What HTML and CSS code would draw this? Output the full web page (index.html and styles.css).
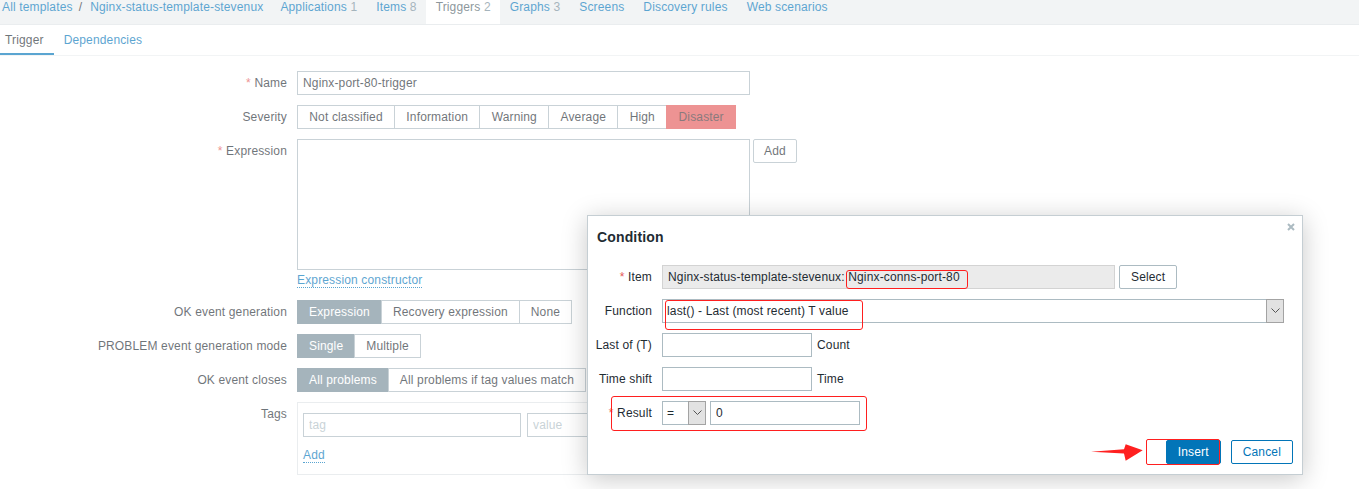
FILE: index.html
```html
<!DOCTYPE html>
<html lang="en">
<head>
<meta charset="utf-8">
<title>Trigger</title>
<link rel="stylesheet" href="styles.css">
</head>
<body>
<header class="hdr">
  <div class="crumbs"><a href="#">All templates</a><span class="sep">/</span><a href="#">Nginx-status-template-stevenux</a></div>
  <ul class="objtabs">
    <li><a href="#">Applications</a> <span class="cnt">1</span></li>
    <li><a href="#">Items</a> <span class="cnt">8</span></li>
    <li class="on"><span class="cur">Triggers</span> <span class="cnt">2</span></li>
    <li><a href="#">Graphs</a> <span class="cnt">3</span></li>
    <li><a href="#">Screens</a></li>
    <li><a href="#">Discovery rules</a></li>
    <li><a href="#">Web scenarios</a></li>
  </ul>
</header>
<nav class="subtabs"><span class="st first on">Trigger</span><a class="st" href="#">Dependencies</a></nav>

<form class="form">
  <label class="lbl"><span class="req">*</span>&nbsp;Name</label>
  <div><input class="inp w-name" value="Nginx-port-80-trigger"></div>

  <label class="lbl">Severity</label>
  <div class="radio">
    <span class="rb sev">Not classified</span><span class="rb sev">Information</span><span class="rb sev">Warning</span><span class="rb sev">Average</span><span class="rb sev">High</span><span class="rb sev dis">Disaster</span>
  </div>

  <label class="lbl"><span class="req">*</span>&nbsp;Expression</label>
  <div>
    <div class="exprline"><textarea class="ta"></textarea><button type="button" class="btn-alt ml3">Add</button></div>
    <div class="linkline"><a class="dotted" href="#">Expression constructor</a></div>
  </div>

  <label class="lbl">OK event generation</label>
  <div class="radio"><span class="rb sel-on">Expression</span><span class="rb">Recovery expression</span><span class="rb">None</span></div>

  <label class="lbl">PROBLEM event generation mode</label>
  <div class="radio"><span class="rb sel-on">Single</span><span class="rb">Multiple</span></div>

  <label class="lbl">OK event closes</label>
  <div class="radio"><span class="rb sel-on">All problems</span><span class="rb">All problems if tag values match</span></div>

  <label class="lbl">Tags</label>
  <div class="tags">
    <div class="tagrow"><input class="inp w-tag" placeholder="tag"><input class="inp w-val" placeholder="value"></div>
    <div class="addline"><a class="dotted" href="#">Add</a></div>
  </div>
</form>

<div class="shade"></div>

<div class="dlg">
  <div class="dlg-h"><h4>Condition</h4></div>
  <svg class="close" width="8" height="8" viewBox="0 0 8 8"><path d="M1 1 L7 7 M7 1 L1 7" stroke="#acbbc2" stroke-width="2"/></svg>
  <div class="dlg-body">
    <label class="lbl"><span class="req">*</span>&nbsp;Item</label>
    <div class="frow"><input class="inp ro w-item" readonly value="Nginx-status-template-stevenux: Nginx-conns-port-80"><button type="button" class="btn-alt ml4">Select</button></div>

    <label class="lbl">Function</label>
    <div class="frow"><div class="sel w-func"><span class="sel-t">last() - Last (most recent) T value</span><span class="sel-a"><svg width="9" height="6" viewBox="0 0 9 6"><path d="M0.5 0.5 L4.5 4.5 L8.5 0.5" fill="none" stroke="#555" stroke-width="1"/></svg></span></div></div>

    <label class="lbl">Last of (T)</label>
    <div class="frow"><input class="inp w-num"><span class="unit">Count</span></div>

    <label class="lbl">Time shift</label>
    <div class="frow"><input class="inp w-num"><span class="unit">Time</span></div>

    <label class="lbl"><span class="req">*</span>&nbsp;Result</label>
    <div class="frow"><div class="sel w-op"><span class="sel-t">=</span><span class="sel-a"><svg width="9" height="6" viewBox="0 0 9 6"><path d="M0.5 0.5 L4.5 4.5 L8.5 0.5" fill="none" stroke="#555" stroke-width="1"/></svg></span></div><input class="inp w-num ml4" value="0"></div>
  </div>
  <div class="dlg-f"><button type="button" class="btn">Insert</button><button type="button" class="btn-line">Cancel</button></div>

  <div class="mark m-item"></div>
  <div class="mark m-func"></div>
  <div class="mark m-res"></div>
  <div class="mark m-ins"></div>
  <svg class="arrow" width="56" height="20" viewBox="0 0 56 20"><polygon points="1,8.7 34,6.3 35.7,1.3 52.7,7.2 35.7,17.7 34,10.6" fill="#ff2020"/></svg>
</div>
</body>
</html>
```

FILE: styles.css
```css
* { box-sizing: border-box; }
html, body { margin: 0; padding: 0; }
body {
  font-family: "Liberation Sans", Arial, sans-serif;
  font-size: 12px;
  letter-spacing: 0.15px;
  color: #1f2c33;
  background: #fff;
  width: 1359px;
  height: 489px;
  overflow: hidden;
  position: relative;
}
a { color: #0275b8; text-decoration: none; }

/* header navigation */
.hdr {
  display: flex;
  align-items: flex-start;
  height: 25px;
  background: #ebeef0;
  border-bottom: 1px solid #dfe4e7;
  line-height: 14px;
}
.crumbs { display: flex; padding-left: 2px; }
.sep { margin: 0 8px 0 6px; color: #1f2c33; }
.objtabs { display: flex; list-style: none; margin: 0 0 0 7px; padding: 0; }
.objtabs li { padding: 0 9px 0 10px; height: 24px; }
.objtabs li.on { background: #fff; }
.cur { color: #4f5f68; }
.cnt { color: #768d99; }

/* sub tabs */
.subtabs {
  display: flex;
  height: 31px;
  border-bottom: 1px solid #ebeef0;
}
.st { height: 30px; line-height: 30px; padding: 0 10px; }
.st.first { padding: 0 10px 0 5px; }
.st.on { color: #1f2c33; box-shadow: inset 0 -2px 0 #0275b8; }

/* form */
.form {
  display: grid;
  grid-template-columns: 287px auto;
  column-gap: 10px;
  row-gap: 10px;
  padding-top: 15px;
  align-items: start;
  justify-content: start;
}
.lbl {
  display: flex;
  justify-content: flex-end;
  white-space: nowrap;
  line-height: 24px;
  height: 24px;
}
.req { color: #e45959; }
.inp {
  display: block;
  height: 24px;
  border: 1px solid #acbbc2;
  padding: 0 5px;
  font: inherit;
  letter-spacing: inherit;
  color: #1f2c33;
  background: #fff;
  margin: 0;
  outline: none;
}
.inp::placeholder { color: #acbbc2; }
.w-name { width: 453px; }
.radio { display: flex; }
.rb {
  height: 24px;
  line-height: 22px;
  padding: 0 11px;
  border: 1px solid #acbbc2;
  margin-left: -1px;
  background: #fff;
  white-space: nowrap;
}
.rb.sev { padding: 0 11.3px; }
.rb:first-child { margin-left: 0; }
.rb.sel-on { background: #768d99; border-color: #768d99; color: #fff; }
.rb.dis { background: #e45959; border-color: #e45959; color: #4a3438; }
.exprline { display: flex; align-items: flex-start; }
.ta {
  display: block;
  width: 453px;
  height: 131px;
  border: 1px solid #acbbc2;
  resize: none;
  margin: 0;
  font: inherit;
}
.ml3 { margin-left: 3px; }
.ml4 { margin-left: 4px; }
.btn-alt {
  height: 24px;
  padding: 0 10px;
  border: 1px solid #acbbc2;
  background: #fff;
  color: #1f2c33;
  font: inherit;
  letter-spacing: inherit;
  border-radius: 2px;
  line-height: 22px;
}
.linkline { height: 20px; line-height: 20px; }
.dotted { border-bottom: 1px dotted #0275b8; }
.tags {
  border: 1px solid #dfe4e7;
  padding: 10px 5px 7px;
  width: 640px;
}
.tagrow { display: flex; gap: 6px; }
.w-tag { width: 218px; }
.w-val { width: 218px; }
.addline { margin-top: 6px; height: 24px; line-height: 24px; }

/* overlay */
.shade {
  position: absolute;
  left: 0; top: 0; right: 0; bottom: 0;
  background: rgba(255, 255, 255, 0.35);
  z-index: 1;
}

/* dialog */
.dlg {
  position: absolute;
  left: 587px;
  top: 215px;
  width: 716px;
  height: 260px;
  background: #fff;
  border: 1px solid #c5ced3;
  box-shadow: 0 4px 24px rgba(0, 0, 0, 0.22);
  z-index: 2;
}
.dlg-h { height: 49px; padding: 12px 9px 0; }
.dlg-h h4 { margin: 0; font-size: 14px; line-height: 18px; font-weight: bold; color: #1f2c33; }
.close { position: absolute; right: 7px; top: 7px; }
.dlg-body {
  display: grid;
  grid-template-columns: 55px auto;
  column-gap: 10px;
  row-gap: 10px;
  padding: 0 9px;
  justify-content: start;
}
.frow { display: flex; align-items: center; height: 24px; }
.ro { background: #ebebeb; border-color: #d3d3d3; }
.w-item { width: 453px; }
.btn-alt.ml4 { padding: 0 11px; }
.w-num { width: 150px; }
.unit { margin-left: 5px; }
.sel {
  display: flex;
  height: 24px;
  border: 1px solid #acbbc2;
  background: #fff;
}
.sel-t { flex: 1; padding: 0 4px; line-height: 22px; white-space: nowrap; }
.sel-a {
  width: 18px;
  height: 24px;
  margin: -1px -1px -1px 0;
  background: #e2e2e2;
  border: 1px solid #a3a3a3;
  display: flex;
  align-items: center;
  justify-content: center;
}
.w-func { width: 622px; }
.w-op { width: 44px; }
.dlg-f {
  display: flex;
  justify-content: flex-end;
  gap: 10px;
  padding: 0 9px;
  margin-top: 15px;
}
.btn, .btn-line {
  height: 24px;
  padding: 0 11px;
  font: inherit;
  letter-spacing: inherit;
  line-height: 22px;
  border-radius: 2px;
  border: 1px solid #0275b8;
}
.btn { background: #0275b8; color: #fff; }
.btn-line { background: #fff; color: #0275b8; }

/* screenshot annotations */
.mark {
  position: absolute;
  border: 1px solid #ff1f1f;
  border-radius: 3px;
}
.m-item { left: 258px; top: 54px; width: 122px; height: 19px; }
.m-func { left: 77px; top: 84px; width: 198px; height: 30px; }
.m-res { left: 23px; top: 180px; width: 256px; height: 35px; }
.m-ins {
  left: 558px; top: 223px; width: 74px; height: 26px;
  background: linear-gradient(to right, #fff 17px, transparent 17px);
  border-radius: 2px;
}
.arrow { position: absolute; left: 502px; top: 227px; }
```
